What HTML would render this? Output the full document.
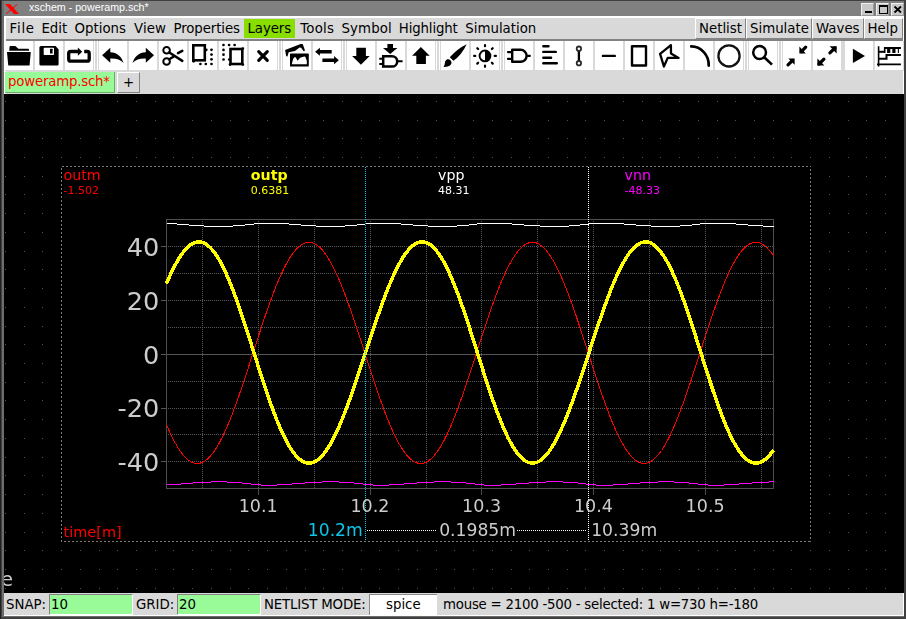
<!DOCTYPE html><html><head><meta charset="utf-8"><title>xschem - poweramp.sch*</title><style>
*{box-sizing:border-box;margin:0;padding:0}
html,body{width:906px;height:619px;overflow:hidden;background:#404040}
body{position:relative;font-family:"DejaVu Sans","Liberation Sans",sans-serif;color:#000;font-size:13.33px}
.a{position:absolute}
.t{position:absolute;white-space:pre;line-height:1}
.btn{position:absolute;background:#d9d9d9;border-top:1px solid #fff;border-left:1px solid #fff;border-right:1px solid #828282;border-bottom:1px solid #828282}
.tb{position:absolute;top:41px;height:29px;width:28px;background:#fff}
.sep{position:absolute;top:41px;height:29px;width:1px;background:#fff}
svg{position:absolute;left:0;top:0;overflow:visible}
svg text{font-family:"DejaVu Sans","Liberation Sans",sans-serif}
</style></head><body>
<div class="a" style="left:0;top:0;width:906px;height:619px;background:#404040"></div>
<div class="a" style="left:0;top:0;width:1px;height:619px;background:#202020"></div>
<div class="a" style="left:2px;top:1px;width:902px;height:616px;background:#6e6e6e"></div>
<div class="a" style="left:4px;top:1px;width:900px;height:16px;background:#808080"></div>
<svg width="24" height="18"><polygon points="5,4 10,4 19,14 14,14" fill="#ff0000"/><line x1="17.3" y1="4.2" x2="6.3" y2="13.8" stroke="#ff0000" stroke-width="1"/></svg>
<div class="t" style="left:29px;top:2px;font-family:'Liberation Sans',sans-serif;font-size:10.67px;color:#fff">xschem - poweramp.sch*</div>
<div class="a" style="left:861px;top:3px;width:13px;height:13px;background:#c8c8c8;border-top:1px solid #f0f0f0;border-left:1px solid #f0f0f0;border-right:1px solid #9a9a9a;border-bottom:1px solid #9a9a9a"></div>
<div class="a" style="left:876px;top:3px;width:13px;height:13px;background:#c8c8c8;border-top:1px solid #f0f0f0;border-left:1px solid #f0f0f0;border-right:1px solid #9a9a9a;border-bottom:1px solid #9a9a9a"></div>
<div class="a" style="left:891px;top:3px;width:13px;height:13px;background:#c8c8c8;border-top:1px solid #f0f0f0;border-left:1px solid #f0f0f0;border-right:1px solid #9a9a9a;border-bottom:1px solid #9a9a9a"></div>
<div class="a" style="left:865px;top:11px;width:7px;height:2px;background:#000"></div>
<div class="a" style="left:879px;top:5px;width:9px;height:9px;border:1px solid #000;border-top-width:2px"></div>
<svg width="906" height="18"><path d="M894.5 6.5 L901 12.5 M901 6.5 L894.5 12.5" stroke="#000" stroke-width="1.8" fill="none"/></svg>
<div class="a" style="left:4px;top:16px;width:900px;height:600px;background:#fff"></div>
<div class="a" style="left:6px;top:18px;width:897px;height:597px;background:#d9d9d9"></div>
<div class="a" style="left:244px;top:19px;width:51px;height:19px;background:#88de00"></div>
<div class="t" style="left:9.6px;top:22px;letter-spacing:0.7px">File</div>
<div class="t" style="left:41.4px;top:22px;letter-spacing:0px">Edit</div>
<div class="t" style="left:74.5px;top:22px;letter-spacing:0px">Options</div>
<div class="t" style="left:134px;top:22px;letter-spacing:0.1px">View</div>
<div class="t" style="left:173.5px;top:22px;letter-spacing:-0.1px">Properties</div>
<div class="t" style="left:247.5px;top:22px;letter-spacing:-0.1px">Layers</div>
<div class="t" style="left:300.3px;top:22px;letter-spacing:0.2px">Tools</div>
<div class="t" style="left:341.5px;top:22px;letter-spacing:0.1px">Symbol</div>
<div class="t" style="left:398.8px;top:22px;letter-spacing:-0.15px">Highlight</div>
<div class="t" style="left:465.3px;top:22px;letter-spacing:0px">Simulation</div>
<div class="btn" style="left:695px;top:18px;width:51px;height:21px"></div>
<div class="t" style="left:699px;top:22px">Netlist</div>
<div class="btn" style="left:746px;top:18px;width:66px;height:21px"></div>
<div class="t" style="left:750px;top:22px">Simulate</div>
<div class="btn" style="left:812px;top:18px;width:52px;height:21px"></div>
<div class="t" style="left:816px;top:22px">Waves</div>
<div class="btn" style="left:864px;top:18px;width:39px;height:21px"></div>
<div class="t" style="left:867.5px;top:22px">Help</div>
<div class="a" style="left:6px;top:39px;width:897px;height:2px;background:#828282"></div>
<div class="a" style="left:5px;top:41px;width:899px;height:30px;background:#d9d9d9"></div>
<div class="tb" style="left:5px"></div>
<div class="tb" style="left:35px"></div>
<div class="tb" style="left:65px"></div>
<div class="tb" style="left:99px"></div>
<div class="tb" style="left:129px"></div>
<div class="tb" style="left:159px"></div>
<div class="tb" style="left:189px"></div>
<div class="tb" style="left:219px"></div>
<div class="tb" style="left:249px"></div>
<div class="tb" style="left:283px"></div>
<div class="tb" style="left:313px"></div>
<div class="tb" style="left:347px"></div>
<div class="tb" style="left:377px"></div>
<div class="tb" style="left:407px"></div>
<div class="tb" style="left:441px"></div>
<div class="tb" style="left:471px"></div>
<div class="tb" style="left:505px"></div>
<div class="tb" style="left:535px"></div>
<div class="tb" style="left:565px"></div>
<div class="tb" style="left:595px"></div>
<div class="tb" style="left:625px"></div>
<div class="tb" style="left:655px"></div>
<div class="tb" style="left:685px"></div>
<div class="tb" style="left:715px"></div>
<div class="tb" style="left:749px"></div>
<div class="tb" style="left:783px"></div>
<div class="tb" style="left:813px"></div>
<div class="tb" style="left:845px"></div>
<div class="tb" style="left:875px"></div>
<div class="sep" style="left:94px"></div><div class="sep" style="left:97px"></div>
<div class="sep" style="left:278px"></div><div class="sep" style="left:281px"></div>
<div class="sep" style="left:342px"></div><div class="sep" style="left:345px"></div>
<div class="sep" style="left:436px"></div><div class="sep" style="left:439px"></div>
<div class="sep" style="left:500px"></div><div class="sep" style="left:503px"></div>
<div class="sep" style="left:744px"></div><div class="sep" style="left:747px"></div>
<div class="sep" style="left:778px"></div><div class="sep" style="left:781px"></div>
<svg width="906" height="72"><path d="M9.2,50.8 L9.6,46.6 Q9.7,46.1 10.3,46.1 L15.3,46.1 L18.4,48.8 L28.3,48.8 Q29,48.9 29.2,50.8 Z" fill="#000"/><path d="M7,51.9 L30.8,51.9 L29.6,64.9 Q29.5,65.5 28.9,65.5 L8.9,65.5 Q8.3,65.5 8.2,64.9 Z" fill="#000"/><path d="M41,46.1 L55.6,46.1 L58.6,49.4 L58.6,64 Q58.6,65.5 57.1,65.5 L41,65.5 Q39.4,65.5 39.4,64 L39.4,47.6 Q39.4,46.1 41,46.1 Z" fill="#000"/><rect x="43.7" y="47.8" width="10.3" height="7.1" rx="0.6" fill="#fff"/><rect x="50" y="48.7" width="2.6" height="4.9" rx="0.5" fill="#000"/><path d="M78,51.5 H70.7 A2,2 0 0 0 68.7,53.5 V59.2 A2,2 0 0 0 70.7,61.2 H87.2 A2,2 0 0 0 89.2,59.2 V53.5 A2,2 0 0 0 87.2,51.5 H84.2" fill="none" stroke="#000" stroke-width="3.3"/><polygon points="77.9,47.6 82.2,51.7 77.9,55.8" fill="#000"/><path d="M102.1,55.2 L110.3,47.8 L110.3,52.3 C117,52.3 121.5,56.5 123.6,63 C120.5,59.3 116,58.3 110.3,58.5 L110.3,62.8 Z" fill="#000"/><path d="M102.1,55.2 L110.3,47.8 L110.3,52.3 C117,52.3 121.5,56.5 123.6,63 C120.5,59.3 116,58.3 110.3,58.5 L110.3,62.8 Z" fill="#000" transform="translate(256.1,0) scale(-1,1)"/><circle cx="166.6" cy="50.3" r="3.3" fill="none" stroke="#000" stroke-width="2"/><circle cx="166.6" cy="61.5" r="3.3" fill="none" stroke="#000" stroke-width="2"/><path d="M169.3,52.5 L182.3,60.9 M169.3,59.3 L173.8,56.5 M178,53.2 L182.3,50.9" stroke="#000" stroke-width="2.5" stroke-linecap="round" fill="none"/><rect x="193.3" y="45.3" width="11.5" height="15" fill="none" stroke="#000" stroke-width="2.6"/><circle cx="211.5" cy="49.8" r="1.35" fill="#000"/><circle cx="211.5" cy="54.6" r="1.35" fill="#000"/><circle cx="211.5" cy="59.3" r="1.35" fill="#000"/><circle cx="211.5" cy="64" r="1.35" fill="#000"/><circle cx="200.4" cy="64" r="1.35" fill="#000"/><circle cx="205.8" cy="64" r="1.35" fill="#000"/><circle cx="206.3" cy="49.8" r="1.35" fill="#000"/><circle cx="193.6" cy="61.3" r="1.35" fill="#000"/><rect x="230.5" y="49" width="11.8" height="15" fill="none" stroke="#000" stroke-width="2.6"/><circle cx="223.5" cy="45" r="1.35" fill="#000"/><circle cx="229.1" cy="45" r="1.35" fill="#000"/><circle cx="234.6" cy="45" r="1.35" fill="#000"/><circle cx="223.5" cy="49.9" r="1.35" fill="#000"/><circle cx="223.5" cy="54.7" r="1.35" fill="#000"/><circle cx="223.5" cy="59.5" r="1.35" fill="#000"/><circle cx="229.3" cy="59.5" r="1.35" fill="#000"/><circle cx="242.8" cy="48.5" r="1.35" fill="#000"/><circle cx="242.8" cy="64.6" r="1.35" fill="#000"/><circle cx="230" cy="64.6" r="1.35" fill="#000"/><path d="M258.7,51.6 L267.3,60.3 M267.3,51.6 L258.7,60.3" stroke="#000" stroke-width="3.1" stroke-linecap="round" fill="none"/><rect x="290" y="53.6" width="18.8" height="12.9" rx="0.5" fill="#000"/><polygon points="291.8,64.3 293.1,59.1 294.4,57.3 295.7,57.3 297.5,60.7 300.1,57.8 304.2,56.5 305.3,56.8 306.8,60.7 306.8,64.3" fill="#fff"/><polygon points="285.1,50.1 300.6,44.1 302.7,44.1 305,50.6 303.7,51.2 301.1,47.8 299.6,47.6 294.9,50.9 288.7,52.2 287.4,56.5 286.2,56.2" fill="#000"/><polygon points="315.1,51.7 319.9,47.7 319.9,49.9 331.7,49.9 331.7,53.6 319.9,53.6 319.9,55.8" fill="#000"/><polygon points="338.8,60.2 334.1,56.1 334.1,58.5 322.4,58.5 322.4,61.9 334.1,61.9 334.1,64.3" fill="#000"/><polygon points="356.3,47.8 365.9,47.8 365.9,55.9 369.7,55.9 360.9,64.7 352.1,55.9 356.3,55.9" fill="#000"/><polygon points="387.4,44.1 393,44.1 393,48.1 397.4,48.1 390.2,54 383,48.1 387.4,48.1" fill="#000"/><path d="M383.2,56.2 H392 A5.2,5.2 0 0 1 392,66.6 H383.2 Z" fill="none" stroke="#000" stroke-width="2.5"/><path d="M379.3,58.7 H383 M379.3,64 H383 M398,61.2 H402.6" stroke="#000" stroke-width="2" fill="none"/><polygon points="420.9,46.9 429.7,55.8 425.9,55.8 425.9,64 416.3,64 416.3,55.8 412.1,55.8" fill="#000"/><path d="M466.7,44.3 Q458,48.3 449.8,57.3 L453.4,60.7 Q461.5,55.4 466.7,44.3 Z" fill="#000"/><path d="M447.8,59.3 C450,59.3 452.1,61.4 451.4,63.5 C450.4,66.4 446.5,67 443.4,67 C445.3,65.3 444.5,62 445.6,60.8 C446.2,59.8 447,59.3 447.8,59.3 Z" fill="#000"/><circle cx="485" cy="55.9" r="5.4" fill="#fff" stroke="#000" stroke-width="1.9"/><path d="M485,50.5 A5.4,5.4 0 0 1 485,61.3 Z" fill="#000"/><path d="M494.70,55.90 L495.90,55.90 M491.86,62.76 L492.71,63.61 M485.00,65.60 L485.00,66.80 M478.14,62.76 L477.29,63.61 M475.30,55.90 L474.10,55.90 M478.14,49.04 L477.29,48.19 M485.00,46.20 L485.00,45.00 M491.86,49.04 L492.71,48.19" stroke="#000" stroke-width="2.2" stroke-linecap="round" fill="none"/><path d="M512.2,49.8 H520.6 A6,6 0 0 1 520.6,61.8 H512.2 Z" fill="none" stroke="#000" stroke-width="2.4" stroke-linejoin="round"/><path d="M508,52.1 H512 M508,58.9 H512 M527,55.9 H529.8" stroke="#000" stroke-width="2.2" stroke-linecap="round" fill="none"/><path d="M543.3,46.2 H548.5 M543.3,51.9 H555.8 M543.3,57.7 H551.1 M543.3,63.3 H556.8" stroke="#000" stroke-width="2.4" stroke-linecap="round" fill="none"/><path d="M578.9,51 V61" stroke="#000" stroke-width="2.3" fill="none"/><circle cx="578.9" cy="48.7" r="2.2" fill="#fff" stroke="#2a2a2a" stroke-width="1.8"/><circle cx="578.9" cy="63.2" r="2.2" fill="#fff" stroke="#2a2a2a" stroke-width="1.8"/><path d="M602.9,55.9 H614.8" stroke="#000" stroke-width="2.4" stroke-linecap="round" fill="none"/><rect x="632" y="46.3" width="14" height="19.2" fill="none" stroke="#000" stroke-width="2.4" stroke-linejoin="round"/><polygon points="670.9,45.2 660.1,53.9 663.9,66.5 667.7,57.9 678.6,57.9 671,53.6" fill="none" stroke="#000" stroke-width="2.3" stroke-linejoin="round"/><path d="M691.2,46.4 A17.5,18.5 0 0 1 708.7,65.6" stroke="#000" stroke-width="2.7" stroke-linecap="round" fill="none"/><circle cx="729" cy="55.9" r="10.6" fill="none" stroke="#111" stroke-width="2.3"/><circle cx="759.6" cy="52.5" r="6.4" fill="none" stroke="#000" stroke-width="2.5"/><path d="M764.2,57.2 L772,64.6" stroke="#000" stroke-width="2.6" fill="none"/><polygon points="788.3,58.5 794.6,58.5 794.6,64.8" fill="#000"/><path d="M788,64.9 L792.5,60.5" stroke="#000" stroke-width="3.2" stroke-linecap="round"/><polygon points="799.4,46.6 799.4,53.6 805.8,53.6" fill="#000"/><path d="M805.7,47.1 L801.5,51.5" stroke="#000" stroke-width="3.2" stroke-linecap="round"/><polygon points="829.7,46.3 836.6,46.3 836.6,53.6" fill="#000"/><path d="M829.9,52.8 L835,48" stroke="#000" stroke-width="3.2" stroke-linecap="round"/><polygon points="817.4,58.5 817.4,65.5 824.4,65.5" fill="#000"/><path d="M823.9,59.1 L819,64" stroke="#000" stroke-width="3.2" stroke-linecap="round"/><polygon points="852.9,48.8 852.9,63 865,55.9" fill="#000"/><path d="M878.6,46.2 V66.6 M877,64.4 H900.9" stroke="#000" stroke-width="1.6" fill="none"/><path d="M879,51.8 H884.9" stroke="#000" stroke-width="2" fill="none"/><rect x="883.9" y="47" width="15" height="6" fill="#000"/><rect x="897" y="47" width="3.9" height="2" fill="#000"/><rect x="885.5" y="49" width="1.6" height="4.2" fill="#fff"/><rect x="890.3" y="49" width="2" height="4.2" fill="#fff"/><rect x="895.5" y="49" width="2.3" height="4.2" fill="#fff"/><path d="M879,58.7 H886.5 V55.1 H900.9" stroke="#000" stroke-width="2" fill="none"/></svg>
<div class="a" style="left:5px;top:72px;width:110px;height:21px;background:#98fb98;border-right:1px solid #62b062;border-bottom:1px solid #62b062"></div>
<div class="t" style="left:8px;top:75px;letter-spacing:-0.2px;color:#f00">poweramp.sch*</div>
<div class="btn" style="left:117px;top:72px;width:23px;height:21px"></div>
<div class="t" style="left:123px;top:76px">+</div>
<div class="a" style="left:4px;top:94px;width:900px;height:499px;background:#000"></div>
<svg width="906" height="619" style="clip-path:inset(94px 2px 26px 4px);will-change:transform"><path d="M5 101.5h1M24 101.5h1M42 101.5h1M61 101.5h1M80 101.5h1M99 101.5h1M117 101.5h1M136 101.5h1M155 101.5h1M173 101.5h1M192 101.5h1M211 101.5h1M230 101.5h1M248 101.5h1M267 101.5h1M286 101.5h1M305 101.5h1M323 101.5h1M342 101.5h1M361 101.5h1M379 101.5h1M398 101.5h1M417 101.5h1M436 101.5h1M454 101.5h1M473 101.5h1M492 101.5h1M511 101.5h1M529 101.5h1M548 101.5h1M567 101.5h1M585 101.5h1M604 101.5h1M623 101.5h1M642 101.5h1M660 101.5h1M679 101.5h1M698 101.5h1M717 101.5h1M735 101.5h1M754 101.5h1M773 101.5h1M791 101.5h1M810 101.5h1M829 101.5h1M848 101.5h1M866 101.5h1M885 101.5h1M5 120.5h1M24 120.5h1M42 120.5h1M61 120.5h1M80 120.5h1M99 120.5h1M117 120.5h1M136 120.5h1M155 120.5h1M173 120.5h1M192 120.5h1M211 120.5h1M230 120.5h1M248 120.5h1M267 120.5h1M286 120.5h1M305 120.5h1M323 120.5h1M342 120.5h1M361 120.5h1M379 120.5h1M398 120.5h1M417 120.5h1M436 120.5h1M454 120.5h1M473 120.5h1M492 120.5h1M511 120.5h1M529 120.5h1M548 120.5h1M567 120.5h1M585 120.5h1M604 120.5h1M623 120.5h1M642 120.5h1M660 120.5h1M679 120.5h1M698 120.5h1M717 120.5h1M735 120.5h1M754 120.5h1M773 120.5h1M791 120.5h1M810 120.5h1M829 120.5h1M848 120.5h1M866 120.5h1M885 120.5h1M5 138.5h1M24 138.5h1M42 138.5h1M61 138.5h1M80 138.5h1M99 138.5h1M117 138.5h1M136 138.5h1M155 138.5h1M173 138.5h1M192 138.5h1M211 138.5h1M230 138.5h1M248 138.5h1M267 138.5h1M286 138.5h1M305 138.5h1M323 138.5h1M342 138.5h1M361 138.5h1M379 138.5h1M398 138.5h1M417 138.5h1M436 138.5h1M454 138.5h1M473 138.5h1M492 138.5h1M511 138.5h1M529 138.5h1M548 138.5h1M567 138.5h1M585 138.5h1M604 138.5h1M623 138.5h1M642 138.5h1M660 138.5h1M679 138.5h1M698 138.5h1M717 138.5h1M735 138.5h1M754 138.5h1M773 138.5h1M791 138.5h1M810 138.5h1M829 138.5h1M848 138.5h1M866 138.5h1M885 138.5h1M5 157.5h1M24 157.5h1M42 157.5h1M61 157.5h1M80 157.5h1M99 157.5h1M117 157.5h1M136 157.5h1M155 157.5h1M173 157.5h1M192 157.5h1M211 157.5h1M230 157.5h1M248 157.5h1M267 157.5h1M286 157.5h1M305 157.5h1M323 157.5h1M342 157.5h1M361 157.5h1M379 157.5h1M398 157.5h1M417 157.5h1M436 157.5h1M454 157.5h1M473 157.5h1M492 157.5h1M511 157.5h1M529 157.5h1M548 157.5h1M567 157.5h1M585 157.5h1M604 157.5h1M623 157.5h1M642 157.5h1M660 157.5h1M679 157.5h1M698 157.5h1M717 157.5h1M735 157.5h1M754 157.5h1M773 157.5h1M791 157.5h1M810 157.5h1M829 157.5h1M848 157.5h1M866 157.5h1M885 157.5h1M5 176.5h1M24 176.5h1M42 176.5h1M829 176.5h1M848 176.5h1M866 176.5h1M885 176.5h1M5 194.5h1M24 194.5h1M42 194.5h1M829 194.5h1M848 194.5h1M866 194.5h1M885 194.5h1M5 213.5h1M24 213.5h1M42 213.5h1M829 213.5h1M848 213.5h1M866 213.5h1M885 213.5h1M5 232.5h1M24 232.5h1M42 232.5h1M829 232.5h1M848 232.5h1M866 232.5h1M885 232.5h1M5 251.5h1M24 251.5h1M42 251.5h1M829 251.5h1M848 251.5h1M866 251.5h1M885 251.5h1M5 269.5h1M24 269.5h1M42 269.5h1M829 269.5h1M848 269.5h1M866 269.5h1M885 269.5h1M5 288.5h1M24 288.5h1M42 288.5h1M829 288.5h1M848 288.5h1M866 288.5h1M885 288.5h1M5 307.5h1M24 307.5h1M42 307.5h1M829 307.5h1M848 307.5h1M866 307.5h1M885 307.5h1M5 326.5h1M24 326.5h1M42 326.5h1M829 326.5h1M848 326.5h1M866 326.5h1M885 326.5h1M5 344.5h1M24 344.5h1M42 344.5h1M829 344.5h1M848 344.5h1M866 344.5h1M885 344.5h1M5 363.5h1M24 363.5h1M42 363.5h1M829 363.5h1M848 363.5h1M866 363.5h1M885 363.5h1M5 382.5h1M24 382.5h1M42 382.5h1M829 382.5h1M848 382.5h1M866 382.5h1M885 382.5h1M5 400.5h1M24 400.5h1M42 400.5h1M829 400.5h1M848 400.5h1M866 400.5h1M885 400.5h1M5 419.5h1M24 419.5h1M42 419.5h1M829 419.5h1M848 419.5h1M866 419.5h1M885 419.5h1M5 438.5h1M24 438.5h1M42 438.5h1M829 438.5h1M848 438.5h1M866 438.5h1M885 438.5h1M5 457.5h1M24 457.5h1M42 457.5h1M829 457.5h1M848 457.5h1M866 457.5h1M885 457.5h1M5 475.5h1M24 475.5h1M42 475.5h1M829 475.5h1M848 475.5h1M866 475.5h1M885 475.5h1M5 494.5h1M24 494.5h1M42 494.5h1M829 494.5h1M848 494.5h1M866 494.5h1M885 494.5h1M5 513.5h1M24 513.5h1M42 513.5h1M829 513.5h1M848 513.5h1M866 513.5h1M885 513.5h1M5 532.5h1M24 532.5h1M42 532.5h1M829 532.5h1M848 532.5h1M866 532.5h1M885 532.5h1M5 550.5h1M24 550.5h1M42 550.5h1M61 550.5h1M80 550.5h1M99 550.5h1M117 550.5h1M136 550.5h1M155 550.5h1M173 550.5h1M192 550.5h1M211 550.5h1M230 550.5h1M248 550.5h1M267 550.5h1M286 550.5h1M305 550.5h1M323 550.5h1M342 550.5h1M361 550.5h1M379 550.5h1M398 550.5h1M417 550.5h1M436 550.5h1M454 550.5h1M473 550.5h1M492 550.5h1M511 550.5h1M529 550.5h1M548 550.5h1M567 550.5h1M585 550.5h1M604 550.5h1M623 550.5h1M642 550.5h1M660 550.5h1M679 550.5h1M698 550.5h1M717 550.5h1M735 550.5h1M754 550.5h1M773 550.5h1M791 550.5h1M810 550.5h1M829 550.5h1M848 550.5h1M866 550.5h1M885 550.5h1M5 569.5h1M24 569.5h1M42 569.5h1M61 569.5h1M80 569.5h1M99 569.5h1M117 569.5h1M136 569.5h1M155 569.5h1M173 569.5h1M192 569.5h1M211 569.5h1M230 569.5h1M248 569.5h1M267 569.5h1M286 569.5h1M305 569.5h1M323 569.5h1M342 569.5h1M361 569.5h1M379 569.5h1M398 569.5h1M417 569.5h1M436 569.5h1M454 569.5h1M473 569.5h1M492 569.5h1M511 569.5h1M529 569.5h1M548 569.5h1M567 569.5h1M585 569.5h1M604 569.5h1M623 569.5h1M642 569.5h1M660 569.5h1M679 569.5h1M698 569.5h1M717 569.5h1M735 569.5h1M754 569.5h1M773 569.5h1M791 569.5h1M810 569.5h1M829 569.5h1M848 569.5h1M866 569.5h1M885 569.5h1M5 588.5h1M24 588.5h1M42 588.5h1M61 588.5h1M80 588.5h1M99 588.5h1M117 588.5h1M136 588.5h1M155 588.5h1M173 588.5h1M192 588.5h1M211 588.5h1M230 588.5h1M248 588.5h1M267 588.5h1M286 588.5h1M305 588.5h1M323 588.5h1M342 588.5h1M361 588.5h1M379 588.5h1M398 588.5h1M417 588.5h1M436 588.5h1M454 588.5h1M473 588.5h1M492 588.5h1M511 588.5h1M529 588.5h1M548 588.5h1M567 588.5h1M585 588.5h1M604 588.5h1M623 588.5h1M642 588.5h1M660 588.5h1M679 588.5h1M698 588.5h1M717 588.5h1M735 588.5h1M754 588.5h1M773 588.5h1M791 588.5h1M810 588.5h1M829 588.5h1M848 588.5h1M866 588.5h1M885 588.5h1" stroke="#555" stroke-width="1" fill="none" shape-rendering="crispEdges"/><rect x="61.5" y="166.5" width="749.0" height="375.0" fill="#000"/><g shape-rendering="crispEdges"><line x1="202.5" y1="221" x2="202.5" y2="488" stroke="#585858" stroke-dasharray="1 1"/><line x1="258.5" y1="221" x2="258.5" y2="488" stroke="#585858" stroke-dasharray="1 1"/><line x1="314.5" y1="221" x2="314.5" y2="488" stroke="#585858" stroke-dasharray="1 1"/><line x1="370.5" y1="221" x2="370.5" y2="488" stroke="#585858" stroke-dasharray="1 1"/><line x1="426.5" y1="221" x2="426.5" y2="488" stroke="#585858" stroke-dasharray="1 1"/><line x1="481.5" y1="221" x2="481.5" y2="488" stroke="#585858" stroke-dasharray="1 1"/><line x1="537.5" y1="221" x2="537.5" y2="488" stroke="#585858" stroke-dasharray="1 1"/><line x1="593.5" y1="221" x2="593.5" y2="488" stroke="#585858" stroke-dasharray="1 1"/><line x1="649.5" y1="221" x2="649.5" y2="488" stroke="#585858" stroke-dasharray="1 1"/><line x1="705.5" y1="221" x2="705.5" y2="488" stroke="#585858" stroke-dasharray="1 1"/><line x1="761.5" y1="221" x2="761.5" y2="488" stroke="#585858" stroke-dasharray="1 1"/><line x1="168" y1="246.5" x2="773" y2="246.5" stroke="#585858" stroke-dasharray="1 1"/><line x1="168" y1="273.5" x2="773" y2="273.5" stroke="#585858" stroke-dasharray="1 1"/><line x1="168" y1="300.5" x2="773" y2="300.5" stroke="#585858" stroke-dasharray="1 1"/><line x1="168" y1="327.5" x2="773" y2="327.5" stroke="#585858" stroke-dasharray="1 1"/><line x1="168" y1="381.5" x2="773" y2="381.5" stroke="#585858" stroke-dasharray="1 1"/><line x1="168" y1="408.5" x2="773" y2="408.5" stroke="#585858" stroke-dasharray="1 1"/><line x1="168" y1="434.5" x2="773" y2="434.5" stroke="#585858" stroke-dasharray="1 1"/><line x1="168" y1="461.5" x2="773" y2="461.5" stroke="#585858" stroke-dasharray="1 1"/><line x1="166.5" y1="354.5" x2="773.5" y2="354.5" stroke="#555"/><line x1="161" y1="246.5" x2="166.5" y2="246.5" stroke="#555"/><line x1="161" y1="300.5" x2="166.5" y2="300.5" stroke="#555"/><line x1="161" y1="354.5" x2="166.5" y2="354.5" stroke="#555"/><line x1="161" y1="408.5" x2="166.5" y2="408.5" stroke="#555"/><line x1="161" y1="461.5" x2="166.5" y2="461.5" stroke="#555"/><line x1="258.5" y1="488.5" x2="258.5" y2="495" stroke="#4c4c4c"/><line x1="370.5" y1="488.5" x2="370.5" y2="495" stroke="#4c4c4c"/><line x1="481.5" y1="488.5" x2="481.5" y2="495" stroke="#4c4c4c"/><line x1="593.5" y1="488.5" x2="593.5" y2="495" stroke="#4c4c4c"/><line x1="705.5" y1="488.5" x2="705.5" y2="495" stroke="#4c4c4c"/><rect x="166.5" y="219.5" width="607.0" height="269.0" fill="none" stroke="#4f4f4f"/></g><g shape-rendering="crispEdges"><polyline points="166.5,424.7 167.5,427.1 168.5,429.3 169.5,431.6 170.5,433.7 171.5,435.8 172.5,437.8 173.5,439.8 174.5,441.7 175.5,443.5 176.5,445.2 177.5,446.9 178.5,448.5 179.5,450.0 180.5,451.5 181.5,452.9 182.5,454.1 183.5,455.4 184.5,456.5 185.5,457.5 186.5,458.5 187.5,459.4 188.5,460.2 189.5,460.9 190.5,461.5 191.5,462.1 192.5,462.5 193.5,462.9 194.5,463.2 195.5,463.4 196.5,463.5 197.5,463.5 198.5,463.4 199.5,463.3 200.5,463.0 201.5,462.7 202.5,462.3 203.5,461.8 204.5,461.2 205.5,460.5 206.5,459.7 207.5,458.9 208.5,458.0 209.5,457.0 210.5,455.9 211.5,454.7 212.5,453.4 213.5,452.1 214.5,450.7 215.5,449.2 216.5,447.6 217.5,446.0 218.5,444.3 219.5,442.5 220.5,440.6 221.5,438.7 222.5,436.7 223.5,434.6 224.5,432.5 225.5,430.3 226.5,428.1 227.5,425.8 228.5,423.4 229.5,421.0 230.5,418.5 231.5,416.0 232.5,413.4 233.5,410.8 234.5,408.1 235.5,405.4 236.5,402.6 237.5,399.8 238.5,397.0 239.5,394.1 240.5,391.2 241.5,388.3 242.5,385.3 243.5,382.3 244.5,379.3 245.5,376.3 246.5,373.2 247.5,370.2 248.5,367.1 249.5,364.0 250.5,360.9 251.5,357.8 252.5,354.7 253.5,351.6 254.5,348.5 255.5,345.4 256.5,342.3 257.5,339.2 258.5,336.1 259.5,333.0 260.5,330.0 261.5,326.9 262.5,323.9 263.5,320.9 264.5,318.0 265.5,315.0 266.5,312.1 267.5,309.3 268.5,306.4 269.5,303.6 270.5,300.9 271.5,298.1 272.5,295.5 273.5,292.8 274.5,290.2 275.5,287.7 276.5,285.2 277.5,282.8 278.5,280.4 279.5,278.1 280.5,275.8 281.5,273.6 282.5,271.5 283.5,269.4 284.5,267.4 285.5,265.5 286.5,263.6 287.5,261.8 288.5,260.1 289.5,258.4 290.5,256.8 291.5,255.3 292.5,253.9 293.5,252.6 294.5,251.3 295.5,250.1 296.5,249.0 297.5,248.0 298.5,247.0 299.5,246.2 300.5,245.4 301.5,244.7 302.5,244.1 303.5,243.6 304.5,243.2 305.5,242.8 306.5,242.6 307.5,242.4 308.5,242.3 309.5,242.3 310.5,242.4 311.5,242.6 312.5,242.9 313.5,243.2 314.5,243.6 315.5,244.2 316.5,244.8 317.5,245.5 318.5,246.3 319.5,247.1 320.5,248.1 321.5,249.1 322.5,250.2 323.5,251.4 324.5,252.7 325.5,254.1 326.5,255.5 327.5,257.0 328.5,258.6 329.5,260.3 330.5,262.0 331.5,263.8 332.5,265.7 333.5,267.6 334.5,269.7 335.5,271.7 336.5,273.9 337.5,276.1 338.5,278.4 339.5,280.7 340.5,283.1 341.5,285.5 342.5,288.0 343.5,290.5 344.5,293.1 345.5,295.8 346.5,298.5 347.5,301.2 348.5,304.0 349.5,306.8 350.5,309.6 351.5,312.5 352.5,315.4 353.5,318.3 354.5,321.3 355.5,324.3 356.5,327.3 357.5,330.3 358.5,333.4 359.5,336.5 360.5,339.6 361.5,342.6 362.5,345.7 363.5,348.8 364.5,352.0 365.5,355.1 366.5,358.2 367.5,361.3 368.5,364.4 369.5,367.5 370.5,370.5 371.5,373.6 372.5,376.6 373.5,379.7 374.5,382.7 375.5,385.7 376.5,388.6 377.5,391.6 378.5,394.4 379.5,397.3 380.5,400.1 381.5,402.9 382.5,405.7 383.5,408.4 384.5,411.1 385.5,413.7 386.5,416.3 387.5,418.8 388.5,421.3 389.5,423.7 390.5,426.0 391.5,428.3 392.5,430.6 393.5,432.8 394.5,434.9 395.5,436.9 396.5,438.9 397.5,440.8 398.5,442.7 399.5,444.5 400.5,446.2 401.5,447.8 402.5,449.4 403.5,450.9 404.5,452.3 405.5,453.6 406.5,454.8 407.5,456.0 408.5,457.1 409.5,458.1 410.5,459.0 411.5,459.8 412.5,460.6 413.5,461.2 414.5,461.8 415.5,462.3 416.5,462.7 417.5,463.0 418.5,463.3 419.5,463.4 420.5,463.5 421.5,463.5 422.5,463.3 423.5,463.1 424.5,462.8 425.5,462.5 426.5,462.0 427.5,461.4 428.5,460.8 429.5,460.1 430.5,459.3 431.5,458.4 432.5,457.4 433.5,456.4 434.5,455.2 435.5,454.0 436.5,452.7 437.5,451.3 438.5,449.9 439.5,448.3 440.5,446.7 441.5,445.0 442.5,443.3 443.5,441.4 444.5,439.5 445.5,437.6 446.5,435.5 447.5,433.4 448.5,431.3 449.5,429.1 450.5,426.8 451.5,424.4 452.5,422.0 453.5,419.6 454.5,417.1 455.5,414.5 456.5,411.9 457.5,409.3 458.5,406.6 459.5,403.8 460.5,401.0 461.5,398.2 462.5,395.4 463.5,392.5 464.5,389.6 465.5,386.6 466.5,383.6 467.5,380.6 468.5,377.6 469.5,374.6 470.5,371.5 471.5,368.5 472.5,365.4 473.5,362.3 474.5,359.2 475.5,356.1 476.5,353.0 477.5,349.8 478.5,346.7 479.5,343.6 480.5,340.5 481.5,337.5 482.5,334.4 483.5,331.3 484.5,328.3 485.5,325.3 486.5,322.3 487.5,319.3 488.5,316.3 489.5,313.4 490.5,310.5 491.5,307.7 492.5,304.9 493.5,302.1 494.5,299.3 495.5,296.6 496.5,294.0 497.5,291.4 498.5,288.8 499.5,286.3 500.5,283.8 501.5,281.4 502.5,279.1 503.5,276.8 504.5,274.6 505.5,272.4 506.5,270.3 507.5,268.3 508.5,266.3 509.5,264.4 510.5,262.6 511.5,260.8 512.5,259.1 513.5,257.5 514.5,256.0 515.5,254.5 516.5,253.1 517.5,251.8 518.5,250.6 519.5,249.5 520.5,248.4 521.5,247.4 522.5,246.5 523.5,245.7 524.5,245.0 525.5,244.4 526.5,243.8 527.5,243.3 528.5,243.0 529.5,242.7 530.5,242.5 531.5,242.3 532.5,242.3 533.5,242.4 534.5,242.5 535.5,242.7 536.5,243.0 537.5,243.4 538.5,243.9 539.5,244.5 540.5,245.2 541.5,245.9 542.5,246.7 543.5,247.7 544.5,248.7 545.5,249.7 546.5,250.9 547.5,252.1 548.5,253.5 549.5,254.9 550.5,256.3 551.5,257.9 552.5,259.5 553.5,261.2 554.5,263.0 555.5,264.9 556.5,266.8 557.5,268.8 558.5,270.8 559.5,272.9 560.5,275.1 561.5,277.4 562.5,279.7 563.5,282.0 564.5,284.4 565.5,286.9 566.5,289.4 567.5,292.0 568.5,294.6 569.5,297.3 570.5,300.0 571.5,302.7 572.5,305.5 573.5,308.4 574.5,311.2 575.5,314.1 576.5,317.0 577.5,320.0 578.5,323.0 579.5,326.0 580.5,329.0 581.5,332.1 582.5,335.1 583.5,338.2 584.5,341.3 585.5,344.4 586.5,347.5 587.5,350.6 588.5,353.7 589.5,356.8 590.5,359.9 591.5,363.0 592.5,366.1 593.5,369.2 594.5,372.3 595.5,375.3 596.5,378.3 597.5,381.4 598.5,384.4 599.5,387.3 600.5,390.3 601.5,393.2 602.5,396.1 603.5,398.9 604.5,401.7 605.5,404.5 606.5,407.2 607.5,409.9 608.5,412.5 609.5,415.1 610.5,417.7 611.5,420.2 612.5,422.6 613.5,425.0 614.5,427.3 615.5,429.6 616.5,431.8 617.5,434.0 618.5,436.0 619.5,438.1 620.5,440.0 621.5,441.9 622.5,443.7 623.5,445.4 624.5,447.1 625.5,448.7 626.5,450.2 627.5,451.6 628.5,453.0 629.5,454.3 630.5,455.5 631.5,456.6 632.5,457.6 633.5,458.6 634.5,459.5 635.5,460.3 636.5,461.0 637.5,461.6 638.5,462.1 639.5,462.6 640.5,462.9 641.5,463.2 642.5,463.4 643.5,463.5 644.5,463.5 645.5,463.4 646.5,463.2 647.5,463.0 648.5,462.6 649.5,462.2 650.5,461.7 651.5,461.1 652.5,460.4 653.5,459.6 654.5,458.8 655.5,457.8 656.5,456.8 657.5,455.7 658.5,454.5 659.5,453.3 660.5,451.9 661.5,450.5 662.5,449.0 663.5,447.4 664.5,445.8 665.5,444.1 666.5,442.3 667.5,440.4 668.5,438.5 669.5,436.5 670.5,434.4 671.5,432.2 672.5,430.0 673.5,427.8 674.5,425.5 675.5,423.1 676.5,420.7 677.5,418.2 678.5,415.7 679.5,413.1 680.5,410.4 681.5,407.8 682.5,405.0 683.5,402.3 684.5,399.5 685.5,396.6 686.5,393.8 687.5,390.9 688.5,387.9 689.5,385.0 690.5,382.0 691.5,379.0 692.5,375.9 693.5,372.9 694.5,369.8 695.5,366.7 696.5,363.6 697.5,360.5 698.5,357.4 699.5,354.3 700.5,351.2 701.5,348.1 702.5,345.0 703.5,341.9 704.5,338.8 705.5,335.7 706.5,332.7 707.5,329.6 708.5,326.6 709.5,323.6 710.5,320.6 711.5,317.6 712.5,314.7 713.5,311.8 714.5,308.9 715.5,306.1 716.5,303.3 717.5,300.5 718.5,297.8 719.5,295.1 720.5,292.5 721.5,289.9 722.5,287.4 723.5,284.9 724.5,282.5 725.5,280.1 726.5,277.8 727.5,275.6 728.5,273.4 729.5,271.2 730.5,269.2 731.5,267.2 732.5,265.2 733.5,263.4 734.5,261.6 735.5,259.9 736.5,258.2 737.5,256.7 738.5,255.2 739.5,253.7 740.5,252.4 741.5,251.1 742.5,250.0 743.5,248.9 744.5,247.9 745.5,246.9 746.5,246.1 747.5,245.3 748.5,244.6 749.5,244.0 750.5,243.5 751.5,243.1 752.5,242.8 753.5,242.5 754.5,242.4 755.5,242.3 756.5,242.3 757.5,242.4 758.5,242.6 759.5,242.9 760.5,243.3 761.5,243.7 762.5,244.2 763.5,244.9 764.5,245.6 765.5,246.4 766.5,247.2 767.5,248.2 768.5,249.3 769.5,250.4 770.5,251.6 771.5,252.9 772.5,254.2 773.5,255.7" fill="none" stroke="#ff0000" stroke-width="1"/><polyline points="166.5,223.5 167.5,223.5 168.5,223.5 169.5,223.5 170.5,223.5 171.5,223.5 172.5,223.5 173.5,223.5 174.5,223.5 175.5,223.5 176.5,223.5 177.5,224.5 178.5,224.5 179.5,224.5 180.5,224.5 181.5,224.5 182.5,224.5 183.5,224.5 184.5,224.5 185.5,224.5 186.5,224.5 187.5,224.5 188.5,224.5 189.5,225.5 190.5,225.5 191.5,225.5 192.5,225.5 193.5,225.5 194.5,225.5 195.5,225.5 196.5,225.5 197.5,225.5 198.5,225.5 199.5,225.5 200.5,225.5 201.5,225.5 202.5,225.5 203.5,225.5 204.5,226.5 205.5,226.5 206.5,226.5 207.5,226.5 208.5,226.5 209.5,226.5 210.5,226.5 211.5,226.5 212.5,226.5 213.5,226.5 214.5,226.5 215.5,226.5 216.5,226.5 217.5,226.5 218.5,226.5 219.5,226.5 220.5,226.5 221.5,226.5 222.5,226.5 223.5,226.5 224.5,226.5 225.5,226.5 226.5,226.5 227.5,226.5 228.5,226.5 229.5,226.5 230.5,226.5 231.5,226.5 232.5,226.5 233.5,225.5 234.5,225.5 235.5,225.5 236.5,225.5 237.5,225.5 238.5,225.5 239.5,225.5 240.5,225.5 241.5,225.5 242.5,225.5 243.5,225.5 244.5,225.5 245.5,224.5 246.5,224.5 247.5,224.5 248.5,224.5 249.5,224.5 250.5,224.5 251.5,224.5 252.5,224.5 253.5,224.5 254.5,223.5 255.5,223.5 256.5,223.5 257.5,223.5 258.5,223.5 259.5,223.5 260.5,223.5 261.5,223.5 262.5,223.5 263.5,223.5 264.5,223.5 265.5,223.5 266.5,223.5 267.5,223.5 268.5,223.5 269.5,223.5 270.5,223.5 271.5,223.5 272.5,223.5 273.5,223.5 274.5,223.5 275.5,223.5 276.5,223.5 277.5,223.5 278.5,223.5 279.5,223.5 280.5,223.5 281.5,223.5 282.5,223.5 283.5,223.5 284.5,223.5 285.5,223.5 286.5,223.5 287.5,223.5 288.5,223.5 289.5,224.5 290.5,224.5 291.5,224.5 292.5,224.5 293.5,224.5 294.5,224.5 295.5,224.5 296.5,224.5 297.5,224.5 298.5,224.5 299.5,224.5 300.5,224.5 301.5,225.5 302.5,225.5 303.5,225.5 304.5,225.5 305.5,225.5 306.5,225.5 307.5,225.5 308.5,225.5 309.5,225.5 310.5,225.5 311.5,225.5 312.5,225.5 313.5,225.5 314.5,225.5 315.5,225.5 316.5,226.5 317.5,226.5 318.5,226.5 319.5,226.5 320.5,226.5 321.5,226.5 322.5,226.5 323.5,226.5 324.5,226.5 325.5,226.5 326.5,226.5 327.5,226.5 328.5,226.5 329.5,226.5 330.5,226.5 331.5,226.5 332.5,226.5 333.5,226.5 334.5,226.5 335.5,226.5 336.5,226.5 337.5,226.5 338.5,226.5 339.5,226.5 340.5,226.5 341.5,226.5 342.5,226.5 343.5,226.5 344.5,226.5 345.5,225.5 346.5,225.5 347.5,225.5 348.5,225.5 349.5,225.5 350.5,225.5 351.5,225.5 352.5,225.5 353.5,225.5 354.5,225.5 355.5,225.5 356.5,225.5 357.5,224.5 358.5,224.5 359.5,224.5 360.5,224.5 361.5,224.5 362.5,224.5 363.5,224.5 364.5,224.5 365.5,223.5 366.5,223.5 367.5,223.5 368.5,223.5 369.5,223.5 370.5,223.5 371.5,223.5 372.5,223.5 373.5,223.5 374.5,223.5 375.5,223.5 376.5,223.5 377.5,223.5 378.5,223.5 379.5,223.5 380.5,223.5 381.5,223.5 382.5,223.5 383.5,223.5 384.5,223.5 385.5,223.5 386.5,223.5 387.5,223.5 388.5,223.5 389.5,223.5 390.5,223.5 391.5,223.5 392.5,223.5 393.5,223.5 394.5,223.5 395.5,223.5 396.5,223.5 397.5,223.5 398.5,223.5 399.5,223.5 400.5,223.5 401.5,224.5 402.5,224.5 403.5,224.5 404.5,224.5 405.5,224.5 406.5,224.5 407.5,224.5 408.5,224.5 409.5,224.5 410.5,224.5 411.5,224.5 412.5,224.5 413.5,225.5 414.5,225.5 415.5,225.5 416.5,225.5 417.5,225.5 418.5,225.5 419.5,225.5 420.5,225.5 421.5,225.5 422.5,225.5 423.5,225.5 424.5,225.5 425.5,225.5 426.5,225.5 427.5,225.5 428.5,226.5 429.5,226.5 430.5,226.5 431.5,226.5 432.5,226.5 433.5,226.5 434.5,226.5 435.5,226.5 436.5,226.5 437.5,226.5 438.5,226.5 439.5,226.5 440.5,226.5 441.5,226.5 442.5,226.5 443.5,226.5 444.5,226.5 445.5,226.5 446.5,226.5 447.5,226.5 448.5,226.5 449.5,226.5 450.5,226.5 451.5,226.5 452.5,226.5 453.5,226.5 454.5,226.5 455.5,226.5 456.5,226.5 457.5,225.5 458.5,225.5 459.5,225.5 460.5,225.5 461.5,225.5 462.5,225.5 463.5,225.5 464.5,225.5 465.5,225.5 466.5,225.5 467.5,225.5 468.5,225.5 469.5,224.5 470.5,224.5 471.5,224.5 472.5,224.5 473.5,224.5 474.5,224.5 475.5,224.5 476.5,224.5 477.5,223.5 478.5,223.5 479.5,223.5 480.5,223.5 481.5,223.5 482.5,223.5 483.5,223.5 484.5,223.5 485.5,223.5 486.5,223.5 487.5,223.5 488.5,223.5 489.5,223.5 490.5,223.5 491.5,223.5 492.5,223.5 493.5,223.5 494.5,223.5 495.5,223.5 496.5,223.5 497.5,223.5 498.5,223.5 499.5,223.5 500.5,223.5 501.5,223.5 502.5,223.5 503.5,223.5 504.5,223.5 505.5,223.5 506.5,223.5 507.5,223.5 508.5,223.5 509.5,223.5 510.5,223.5 511.5,223.5 512.5,224.5 513.5,224.5 514.5,224.5 515.5,224.5 516.5,224.5 517.5,224.5 518.5,224.5 519.5,224.5 520.5,224.5 521.5,224.5 522.5,224.5 523.5,224.5 524.5,225.5 525.5,225.5 526.5,225.5 527.5,225.5 528.5,225.5 529.5,225.5 530.5,225.5 531.5,225.5 532.5,225.5 533.5,225.5 534.5,225.5 535.5,225.5 536.5,225.5 537.5,225.5 538.5,225.5 539.5,225.5 540.5,226.5 541.5,226.5 542.5,226.5 543.5,226.5 544.5,226.5 545.5,226.5 546.5,226.5 547.5,226.5 548.5,226.5 549.5,226.5 550.5,226.5 551.5,226.5 552.5,226.5 553.5,226.5 554.5,226.5 555.5,226.5 556.5,226.5 557.5,226.5 558.5,226.5 559.5,226.5 560.5,226.5 561.5,226.5 562.5,226.5 563.5,226.5 564.5,226.5 565.5,226.5 566.5,226.5 567.5,226.5 568.5,226.5 569.5,225.5 570.5,225.5 571.5,225.5 572.5,225.5 573.5,225.5 574.5,225.5 575.5,225.5 576.5,225.5 577.5,225.5 578.5,225.5 579.5,225.5 580.5,224.5 581.5,224.5 582.5,224.5 583.5,224.5 584.5,224.5 585.5,224.5 586.5,224.5 587.5,224.5 588.5,224.5 589.5,223.5 590.5,223.5 591.5,223.5 592.5,223.5 593.5,223.5 594.5,223.5 595.5,223.5 596.5,223.5 597.5,223.5 598.5,223.5 599.5,223.5 600.5,223.5 601.5,223.5 602.5,223.5 603.5,223.5 604.5,223.5 605.5,223.5 606.5,223.5 607.5,223.5 608.5,223.5 609.5,223.5 610.5,223.5 611.5,223.5 612.5,223.5 613.5,223.5 614.5,223.5 615.5,223.5 616.5,223.5 617.5,223.5 618.5,223.5 619.5,223.5 620.5,223.5 621.5,223.5 622.5,223.5 623.5,223.5 624.5,224.5 625.5,224.5 626.5,224.5 627.5,224.5 628.5,224.5 629.5,224.5 630.5,224.5 631.5,224.5 632.5,224.5 633.5,224.5 634.5,224.5 635.5,224.5 636.5,225.5 637.5,225.5 638.5,225.5 639.5,225.5 640.5,225.5 641.5,225.5 642.5,225.5 643.5,225.5 644.5,225.5 645.5,225.5 646.5,225.5 647.5,225.5 648.5,225.5 649.5,225.5 650.5,225.5 651.5,226.5 652.5,226.5 653.5,226.5 654.5,226.5 655.5,226.5 656.5,226.5 657.5,226.5 658.5,226.5 659.5,226.5 660.5,226.5 661.5,226.5 662.5,226.5 663.5,226.5 664.5,226.5 665.5,226.5 666.5,226.5 667.5,226.5 668.5,226.5 669.5,226.5 670.5,226.5 671.5,226.5 672.5,226.5 673.5,226.5 674.5,226.5 675.5,226.5 676.5,226.5 677.5,226.5 678.5,226.5 679.5,226.5 680.5,225.5 681.5,225.5 682.5,225.5 683.5,225.5 684.5,225.5 685.5,225.5 686.5,225.5 687.5,225.5 688.5,225.5 689.5,225.5 690.5,225.5 691.5,225.5 692.5,224.5 693.5,224.5 694.5,224.5 695.5,224.5 696.5,224.5 697.5,224.5 698.5,224.5 699.5,224.5 700.5,223.5 701.5,223.5 702.5,223.5 703.5,223.5 704.5,223.5 705.5,223.5 706.5,223.5 707.5,223.5 708.5,223.5 709.5,223.5 710.5,223.5 711.5,223.5 712.5,223.5 713.5,223.5 714.5,223.5 715.5,223.5 716.5,223.5 717.5,223.5 718.5,223.5 719.5,223.5 720.5,223.5 721.5,223.5 722.5,223.5 723.5,223.5 724.5,223.5 725.5,223.5 726.5,223.5 727.5,223.5 728.5,223.5 729.5,223.5 730.5,223.5 731.5,223.5 732.5,223.5 733.5,223.5 734.5,223.5 735.5,223.5 736.5,224.5 737.5,224.5 738.5,224.5 739.5,224.5 740.5,224.5 741.5,224.5 742.5,224.5 743.5,224.5 744.5,224.5 745.5,224.5 746.5,224.5 747.5,224.5 748.5,225.5 749.5,225.5 750.5,225.5 751.5,225.5 752.5,225.5 753.5,225.5 754.5,225.5 755.5,225.5 756.5,225.5 757.5,225.5 758.5,225.5 759.5,225.5 760.5,225.5 761.5,225.5 762.5,225.5 763.5,226.5 764.5,226.5 765.5,226.5 766.5,226.5 767.5,226.5 768.5,226.5 769.5,226.5 770.5,226.5 771.5,226.5 772.5,226.5 773.5,226.5" fill="none" stroke="#ffffff" stroke-width="1"/><polyline points="166.5,484.5 167.5,484.5 168.5,484.5 169.5,484.5 170.5,484.5 171.5,484.5 172.5,484.5 173.5,484.5 174.5,484.5 175.5,484.5 176.5,484.5 177.5,484.5 178.5,484.5 179.5,484.5 180.5,484.5 181.5,483.5 182.5,483.5 183.5,483.5 184.5,483.5 185.5,483.5 186.5,483.5 187.5,483.5 188.5,483.5 189.5,483.5 190.5,483.5 191.5,483.5 192.5,483.5 193.5,482.5 194.5,482.5 195.5,482.5 196.5,482.5 197.5,482.5 198.5,482.5 199.5,482.5 200.5,482.5 201.5,482.5 202.5,482.5 203.5,482.5 204.5,482.5 205.5,482.5 206.5,482.5 207.5,482.5 208.5,482.5 209.5,482.5 210.5,482.5 211.5,481.5 212.5,481.5 213.5,481.5 214.5,481.5 215.5,481.5 216.5,481.5 217.5,481.5 218.5,481.5 219.5,481.5 220.5,481.5 221.5,481.5 222.5,481.5 223.5,481.5 224.5,481.5 225.5,481.5 226.5,481.5 227.5,482.5 228.5,482.5 229.5,482.5 230.5,482.5 231.5,482.5 232.5,482.5 233.5,482.5 234.5,482.5 235.5,482.5 236.5,482.5 237.5,482.5 238.5,482.5 239.5,482.5 240.5,482.5 241.5,482.5 242.5,483.5 243.5,483.5 244.5,483.5 245.5,483.5 246.5,483.5 247.5,483.5 248.5,483.5 249.5,483.5 250.5,483.5 251.5,484.5 252.5,484.5 253.5,484.5 254.5,484.5 255.5,484.5 256.5,484.5 257.5,484.5 258.5,484.5 259.5,484.5 260.5,484.5 261.5,485.5 262.5,485.5 263.5,485.5 264.5,485.5 265.5,485.5 266.5,485.5 267.5,485.5 268.5,485.5 269.5,485.5 270.5,485.5 271.5,485.5 272.5,485.5 273.5,485.5 274.5,485.5 275.5,485.5 276.5,485.5 277.5,484.5 278.5,484.5 279.5,484.5 280.5,484.5 281.5,484.5 282.5,484.5 283.5,484.5 284.5,484.5 285.5,484.5 286.5,484.5 287.5,484.5 288.5,484.5 289.5,484.5 290.5,484.5 291.5,484.5 292.5,483.5 293.5,483.5 294.5,483.5 295.5,483.5 296.5,483.5 297.5,483.5 298.5,483.5 299.5,483.5 300.5,483.5 301.5,483.5 302.5,483.5 303.5,483.5 304.5,483.5 305.5,482.5 306.5,482.5 307.5,482.5 308.5,482.5 309.5,482.5 310.5,482.5 311.5,482.5 312.5,482.5 313.5,482.5 314.5,482.5 315.5,482.5 316.5,482.5 317.5,482.5 318.5,482.5 319.5,482.5 320.5,482.5 321.5,482.5 322.5,481.5 323.5,481.5 324.5,481.5 325.5,481.5 326.5,481.5 327.5,481.5 328.5,481.5 329.5,481.5 330.5,481.5 331.5,481.5 332.5,481.5 333.5,481.5 334.5,481.5 335.5,481.5 336.5,481.5 337.5,481.5 338.5,481.5 339.5,482.5 340.5,482.5 341.5,482.5 342.5,482.5 343.5,482.5 344.5,482.5 345.5,482.5 346.5,482.5 347.5,482.5 348.5,482.5 349.5,482.5 350.5,482.5 351.5,482.5 352.5,482.5 353.5,482.5 354.5,483.5 355.5,483.5 356.5,483.5 357.5,483.5 358.5,483.5 359.5,483.5 360.5,483.5 361.5,483.5 362.5,483.5 363.5,484.5 364.5,484.5 365.5,484.5 366.5,484.5 367.5,484.5 368.5,484.5 369.5,484.5 370.5,484.5 371.5,484.5 372.5,484.5 373.5,485.5 374.5,485.5 375.5,485.5 376.5,485.5 377.5,485.5 378.5,485.5 379.5,485.5 380.5,485.5 381.5,485.5 382.5,485.5 383.5,485.5 384.5,485.5 385.5,485.5 386.5,485.5 387.5,485.5 388.5,485.5 389.5,484.5 390.5,484.5 391.5,484.5 392.5,484.5 393.5,484.5 394.5,484.5 395.5,484.5 396.5,484.5 397.5,484.5 398.5,484.5 399.5,484.5 400.5,484.5 401.5,484.5 402.5,484.5 403.5,484.5 404.5,483.5 405.5,483.5 406.5,483.5 407.5,483.5 408.5,483.5 409.5,483.5 410.5,483.5 411.5,483.5 412.5,483.5 413.5,483.5 414.5,483.5 415.5,483.5 416.5,483.5 417.5,482.5 418.5,482.5 419.5,482.5 420.5,482.5 421.5,482.5 422.5,482.5 423.5,482.5 424.5,482.5 425.5,482.5 426.5,482.5 427.5,482.5 428.5,482.5 429.5,482.5 430.5,482.5 431.5,482.5 432.5,482.5 433.5,482.5 434.5,481.5 435.5,481.5 436.5,481.5 437.5,481.5 438.5,481.5 439.5,481.5 440.5,481.5 441.5,481.5 442.5,481.5 443.5,481.5 444.5,481.5 445.5,481.5 446.5,481.5 447.5,481.5 448.5,481.5 449.5,481.5 450.5,481.5 451.5,482.5 452.5,482.5 453.5,482.5 454.5,482.5 455.5,482.5 456.5,482.5 457.5,482.5 458.5,482.5 459.5,482.5 460.5,482.5 461.5,482.5 462.5,482.5 463.5,482.5 464.5,482.5 465.5,482.5 466.5,483.5 467.5,483.5 468.5,483.5 469.5,483.5 470.5,483.5 471.5,483.5 472.5,483.5 473.5,483.5 474.5,483.5 475.5,484.5 476.5,484.5 477.5,484.5 478.5,484.5 479.5,484.5 480.5,484.5 481.5,484.5 482.5,484.5 483.5,484.5 484.5,485.5 485.5,485.5 486.5,485.5 487.5,485.5 488.5,485.5 489.5,485.5 490.5,485.5 491.5,485.5 492.5,485.5 493.5,485.5 494.5,485.5 495.5,485.5 496.5,485.5 497.5,485.5 498.5,485.5 499.5,485.5 500.5,485.5 501.5,484.5 502.5,484.5 503.5,484.5 504.5,484.5 505.5,484.5 506.5,484.5 507.5,484.5 508.5,484.5 509.5,484.5 510.5,484.5 511.5,484.5 512.5,484.5 513.5,484.5 514.5,484.5 515.5,484.5 516.5,483.5 517.5,483.5 518.5,483.5 519.5,483.5 520.5,483.5 521.5,483.5 522.5,483.5 523.5,483.5 524.5,483.5 525.5,483.5 526.5,483.5 527.5,483.5 528.5,483.5 529.5,482.5 530.5,482.5 531.5,482.5 532.5,482.5 533.5,482.5 534.5,482.5 535.5,482.5 536.5,482.5 537.5,482.5 538.5,482.5 539.5,482.5 540.5,482.5 541.5,482.5 542.5,482.5 543.5,482.5 544.5,482.5 545.5,482.5 546.5,481.5 547.5,481.5 548.5,481.5 549.5,481.5 550.5,481.5 551.5,481.5 552.5,481.5 553.5,481.5 554.5,481.5 555.5,481.5 556.5,481.5 557.5,481.5 558.5,481.5 559.5,481.5 560.5,481.5 561.5,481.5 562.5,481.5 563.5,482.5 564.5,482.5 565.5,482.5 566.5,482.5 567.5,482.5 568.5,482.5 569.5,482.5 570.5,482.5 571.5,482.5 572.5,482.5 573.5,482.5 574.5,482.5 575.5,482.5 576.5,482.5 577.5,482.5 578.5,483.5 579.5,483.5 580.5,483.5 581.5,483.5 582.5,483.5 583.5,483.5 584.5,483.5 585.5,483.5 586.5,484.5 587.5,484.5 588.5,484.5 589.5,484.5 590.5,484.5 591.5,484.5 592.5,484.5 593.5,484.5 594.5,484.5 595.5,484.5 596.5,485.5 597.5,485.5 598.5,485.5 599.5,485.5 600.5,485.5 601.5,485.5 602.5,485.5 603.5,485.5 604.5,485.5 605.5,485.5 606.5,485.5 607.5,485.5 608.5,485.5 609.5,485.5 610.5,485.5 611.5,485.5 612.5,485.5 613.5,484.5 614.5,484.5 615.5,484.5 616.5,484.5 617.5,484.5 618.5,484.5 619.5,484.5 620.5,484.5 621.5,484.5 622.5,484.5 623.5,484.5 624.5,484.5 625.5,484.5 626.5,484.5 627.5,484.5 628.5,483.5 629.5,483.5 630.5,483.5 631.5,483.5 632.5,483.5 633.5,483.5 634.5,483.5 635.5,483.5 636.5,483.5 637.5,483.5 638.5,483.5 639.5,483.5 640.5,482.5 641.5,482.5 642.5,482.5 643.5,482.5 644.5,482.5 645.5,482.5 646.5,482.5 647.5,482.5 648.5,482.5 649.5,482.5 650.5,482.5 651.5,482.5 652.5,482.5 653.5,482.5 654.5,482.5 655.5,482.5 656.5,482.5 657.5,482.5 658.5,481.5 659.5,481.5 660.5,481.5 661.5,481.5 662.5,481.5 663.5,481.5 664.5,481.5 665.5,481.5 666.5,481.5 667.5,481.5 668.5,481.5 669.5,481.5 670.5,481.5 671.5,481.5 672.5,481.5 673.5,481.5 674.5,482.5 675.5,482.5 676.5,482.5 677.5,482.5 678.5,482.5 679.5,482.5 680.5,482.5 681.5,482.5 682.5,482.5 683.5,482.5 684.5,482.5 685.5,482.5 686.5,482.5 687.5,482.5 688.5,482.5 689.5,483.5 690.5,483.5 691.5,483.5 692.5,483.5 693.5,483.5 694.5,483.5 695.5,483.5 696.5,483.5 697.5,483.5 698.5,484.5 699.5,484.5 700.5,484.5 701.5,484.5 702.5,484.5 703.5,484.5 704.5,484.5 705.5,484.5 706.5,484.5 707.5,484.5 708.5,485.5 709.5,485.5 710.5,485.5 711.5,485.5 712.5,485.5 713.5,485.5 714.5,485.5 715.5,485.5 716.5,485.5 717.5,485.5 718.5,485.5 719.5,485.5 720.5,485.5 721.5,485.5 722.5,485.5 723.5,485.5 724.5,484.5 725.5,484.5 726.5,484.5 727.5,484.5 728.5,484.5 729.5,484.5 730.5,484.5 731.5,484.5 732.5,484.5 733.5,484.5 734.5,484.5 735.5,484.5 736.5,484.5 737.5,484.5 738.5,484.5 739.5,483.5 740.5,483.5 741.5,483.5 742.5,483.5 743.5,483.5 744.5,483.5 745.5,483.5 746.5,483.5 747.5,483.5 748.5,483.5 749.5,483.5 750.5,483.5 751.5,483.5 752.5,482.5 753.5,482.5 754.5,482.5 755.5,482.5 756.5,482.5 757.5,482.5 758.5,482.5 759.5,482.5 760.5,482.5 761.5,482.5 762.5,482.5 763.5,482.5 764.5,482.5 765.5,482.5 766.5,482.5 767.5,482.5 768.5,482.5 769.5,481.5 770.5,481.5 771.5,481.5 772.5,481.5 773.5,481.5" fill="none" stroke="#ff00ff" stroke-width="1"/><polyline points="166.5,283.6 167.5,281.3 168.5,278.9 169.5,276.7 170.5,274.5 171.5,272.3 172.5,270.3 173.5,268.2 174.5,266.3 175.5,264.4 176.5,262.6 177.5,260.8 178.5,259.1 179.5,257.5 180.5,256.0 181.5,254.5 182.5,253.1 183.5,251.8 184.5,250.5 185.5,249.4 186.5,248.3 187.5,247.3 188.5,246.4 189.5,245.6 190.5,244.8 191.5,244.1 192.5,243.6 193.5,243.1 194.5,242.7 195.5,242.3 196.5,242.1 197.5,241.9 198.5,241.9 199.5,241.9 200.5,242.0 201.5,242.2 202.5,242.5 203.5,242.9 204.5,243.3 205.5,243.9 206.5,244.5 207.5,245.3 208.5,246.1 209.5,247.0 210.5,247.9 211.5,249.0 212.5,250.1 213.5,251.4 214.5,252.7 215.5,254.1 216.5,255.6 217.5,257.1 218.5,258.7 219.5,260.4 220.5,262.2 221.5,264.1 222.5,266.0 223.5,268.0 224.5,270.1 225.5,272.2 226.5,274.4 227.5,276.7 228.5,279.0 229.5,281.4 230.5,283.9 231.5,286.4 232.5,288.9 233.5,291.5 234.5,294.2 235.5,296.9 236.5,299.7 237.5,302.5 238.5,305.3 239.5,308.2 240.5,311.1 241.5,314.1 242.5,317.0 243.5,320.1 244.5,323.1 245.5,326.2 246.5,329.3 247.5,332.4 248.5,335.5 249.5,338.6 250.5,341.8 251.5,344.9 252.5,348.1 253.5,351.3 254.5,354.5 255.5,357.6 256.5,360.8 257.5,363.9 258.5,367.1 259.5,370.2 260.5,373.4 261.5,376.5 262.5,379.5 263.5,382.6 264.5,385.6 265.5,388.6 266.5,391.6 267.5,394.6 268.5,397.5 269.5,400.4 270.5,403.2 271.5,406.0 272.5,408.7 273.5,411.4 274.5,414.1 275.5,416.7 276.5,419.2 277.5,421.7 278.5,424.1 279.5,426.5 280.5,428.8 281.5,431.1 282.5,433.3 283.5,435.4 284.5,437.4 285.5,439.4 286.5,441.3 287.5,443.2 288.5,444.9 289.5,446.6 290.5,448.2 291.5,449.8 292.5,451.2 293.5,452.6 294.5,453.9 295.5,455.1 296.5,456.2 297.5,457.3 298.5,458.2 299.5,459.1 300.5,459.9 301.5,460.6 302.5,461.2 303.5,461.8 304.5,462.2 305.5,462.6 306.5,462.8 307.5,463.0 308.5,463.1 309.5,463.1 310.5,463.0 311.5,462.8 312.5,462.6 313.5,462.2 314.5,461.8 315.5,461.3 316.5,460.7 317.5,460.0 318.5,459.2 319.5,458.4 320.5,457.4 321.5,456.4 322.5,455.3 323.5,454.1 324.5,452.9 325.5,451.6 326.5,450.1 327.5,448.7 328.5,447.1 329.5,445.5 330.5,443.8 331.5,442.0 332.5,440.1 333.5,438.2 334.5,436.3 335.5,434.2 336.5,432.1 337.5,430.0 338.5,427.8 339.5,425.5 340.5,423.1 341.5,420.8 342.5,418.3 343.5,415.8 344.5,413.3 345.5,410.7 346.5,408.1 347.5,405.5 348.5,402.7 349.5,400.0 350.5,397.2 351.5,394.4 352.5,391.6 353.5,388.7 354.5,385.8 355.5,382.9 356.5,379.9 357.5,377.0 358.5,374.0 359.5,371.0 360.5,368.0 361.5,365.0 362.5,361.9 363.5,358.9 364.5,355.8 365.5,352.8 366.5,349.7 367.5,346.7 368.5,343.7 369.5,340.6 370.5,337.6 371.5,334.6 372.5,331.6 373.5,328.6 374.5,325.6 375.5,322.7 376.5,319.7 377.5,316.8 378.5,314.0 379.5,311.1 380.5,308.3 381.5,305.5 382.5,302.8 383.5,300.1 384.5,297.4 385.5,294.8 386.5,292.2 387.5,289.6 388.5,287.1 389.5,284.7 390.5,282.3 391.5,280.0 392.5,277.7 393.5,275.4 394.5,273.3 395.5,271.2 396.5,269.1 397.5,267.1 398.5,265.2 399.5,263.3 400.5,261.6 401.5,259.8 402.5,258.2 403.5,256.6 404.5,255.1 405.5,253.7 406.5,252.4 407.5,251.1 408.5,249.9 409.5,248.8 410.5,247.7 411.5,246.8 412.5,245.9 413.5,245.1 414.5,244.4 415.5,243.8 416.5,243.3 417.5,242.8 418.5,242.5 419.5,242.2 420.5,242.0 421.5,241.9 422.5,241.9 423.5,242.0 424.5,242.1 425.5,242.4 426.5,242.7 427.5,243.1 428.5,243.6 429.5,244.2 430.5,244.9 431.5,245.7 432.5,246.6 433.5,247.5 434.5,248.5 435.5,249.6 436.5,250.8 437.5,252.1 438.5,253.5 439.5,254.9 440.5,256.4 441.5,258.0 442.5,259.7 443.5,261.4 444.5,263.3 445.5,265.2 446.5,267.1 447.5,269.2 448.5,271.3 449.5,273.4 450.5,275.7 451.5,278.0 452.5,280.3 453.5,282.8 454.5,285.2 455.5,287.8 456.5,290.4 457.5,293.0 458.5,295.7 459.5,298.4 460.5,301.2 461.5,304.1 462.5,306.9 463.5,309.8 464.5,312.8 465.5,315.7 466.5,318.7 467.5,321.8 468.5,324.8 469.5,327.9 470.5,331.0 471.5,334.1 472.5,337.3 473.5,340.4 474.5,343.6 475.5,346.7 476.5,349.9 477.5,353.1 478.5,356.2 479.5,359.4 480.5,362.6 481.5,365.7 482.5,368.9 483.5,372.0 484.5,375.1 485.5,378.2 486.5,381.3 487.5,384.3 488.5,387.3 489.5,390.3 490.5,393.3 491.5,396.2 492.5,399.1 493.5,401.9 494.5,404.8 495.5,407.5 496.5,410.2 497.5,412.9 498.5,415.5 499.5,418.1 500.5,420.6 501.5,423.1 502.5,425.5 503.5,427.8 504.5,430.1 505.5,432.3 506.5,434.5 507.5,436.6 508.5,438.6 509.5,440.5 510.5,442.4 511.5,444.2 512.5,445.9 513.5,447.5 514.5,449.1 515.5,450.6 516.5,452.0 517.5,453.3 518.5,454.6 519.5,455.8 520.5,456.8 521.5,457.8 522.5,458.7 523.5,459.6 524.5,460.3 525.5,461.0 526.5,461.5 527.5,462.0 528.5,462.4 529.5,462.7 530.5,462.9 531.5,463.1 532.5,463.1 533.5,463.1 534.5,462.9 535.5,462.7 536.5,462.4 537.5,462.0 538.5,461.5 539.5,461.0 540.5,460.3 541.5,459.6 542.5,458.8 543.5,457.9 544.5,456.9 545.5,455.8 546.5,454.7 547.5,453.4 548.5,452.1 549.5,450.8 550.5,449.3 551.5,447.8 552.5,446.2 553.5,444.5 554.5,442.8 555.5,441.0 556.5,439.1 557.5,437.1 558.5,435.1 559.5,433.1 560.5,430.9 561.5,428.7 562.5,426.5 563.5,424.2 564.5,421.8 565.5,419.4 566.5,416.9 567.5,414.4 568.5,411.9 569.5,409.3 570.5,406.6 571.5,403.9 572.5,401.2 573.5,398.5 574.5,395.7 575.5,392.8 576.5,390.0 577.5,387.1 578.5,384.2 579.5,381.2 580.5,378.3 581.5,375.3 582.5,372.3 583.5,369.3 584.5,366.3 585.5,363.3 586.5,360.2 587.5,357.2 588.5,354.1 589.5,351.1 590.5,348.0 591.5,345.0 592.5,342.0 593.5,338.9 594.5,335.9 595.5,332.9 596.5,329.9 597.5,326.9 598.5,324.0 599.5,321.0 600.5,318.1 601.5,315.2 602.5,312.4 603.5,309.5 604.5,306.7 605.5,304.0 606.5,301.3 607.5,298.6 608.5,295.9 609.5,293.3 610.5,290.7 611.5,288.2 612.5,285.8 613.5,283.3 614.5,281.0 615.5,278.7 616.5,276.4 617.5,274.2 618.5,272.1 619.5,270.0 620.5,268.0 621.5,266.0 622.5,264.2 623.5,262.3 624.5,260.6 625.5,258.9 626.5,257.3 627.5,255.8 628.5,254.3 629.5,252.9 630.5,251.6 631.5,250.4 632.5,249.3 633.5,248.2 634.5,247.2 635.5,246.3 636.5,245.5 637.5,244.7 638.5,244.1 639.5,243.5 640.5,243.0 641.5,242.6 642.5,242.3 643.5,242.1 644.5,241.9 645.5,241.9 646.5,241.9 647.5,242.0 648.5,242.2 649.5,242.5 650.5,242.9 651.5,243.4 652.5,244.0 653.5,244.6 654.5,245.3 655.5,246.2 656.5,247.1 657.5,248.1 658.5,249.1 659.5,250.3 660.5,251.5 661.5,252.9 662.5,254.3 663.5,255.7 664.5,257.3 665.5,258.9 666.5,260.7 667.5,262.4 668.5,264.3 669.5,266.2 670.5,268.3 671.5,270.3 672.5,272.5 673.5,274.7 674.5,277.0 675.5,279.3 676.5,281.7 677.5,284.2 678.5,286.7 679.5,289.2 680.5,291.8 681.5,294.5 682.5,297.2 683.5,300.0 684.5,302.8 685.5,305.7 686.5,308.5 687.5,311.5 688.5,314.4 689.5,317.4 690.5,320.4 691.5,323.5 692.5,326.5 693.5,329.6 694.5,332.7 695.5,335.9 696.5,339.0 697.5,342.2 698.5,345.3 699.5,348.5 700.5,351.7 701.5,354.8 702.5,358.0 703.5,361.2 704.5,364.3 705.5,367.5 706.5,370.6 707.5,373.7 708.5,376.8 709.5,379.9 710.5,383.0 711.5,386.0 712.5,389.0 713.5,392.0 714.5,394.9 715.5,397.8 716.5,400.7 717.5,403.5 718.5,406.3 719.5,409.1 720.5,411.7 721.5,414.4 722.5,417.0 723.5,419.5 724.5,422.0 725.5,424.4 726.5,426.8 727.5,429.1 728.5,431.4 729.5,433.5 730.5,435.6 731.5,437.7 732.5,439.7 733.5,441.6 734.5,443.4 735.5,445.2 736.5,446.8 737.5,448.4 738.5,450.0 739.5,451.4 740.5,452.8 741.5,454.0 742.5,455.3 743.5,456.4 744.5,457.4 745.5,458.4 746.5,459.2 747.5,460.0 748.5,460.7 749.5,461.3 750.5,461.8 751.5,462.2 752.5,462.6 753.5,462.8 754.5,463.0 755.5,463.1 756.5,463.1 757.5,463.0 758.5,462.8 759.5,462.5 760.5,462.2 761.5,461.7 762.5,461.2 763.5,460.6 764.5,459.9 765.5,459.1 766.5,458.3 767.5,457.3 768.5,456.3 769.5,455.2 770.5,454.0 771.5,452.7 772.5,451.4 773.5,450.0" fill="none" stroke="#ffff00" stroke-width="3.5" stroke-linejoin="round"/></g><g shape-rendering="crispEdges"><line x1="62" y1="166.5" x2="811" y2="166.5" stroke="#787878" stroke-dasharray="2 2"/><line x1="64" y1="541.5" x2="811" y2="541.5" stroke="#787878" stroke-dasharray="2 2"/><line x1="61.5" y1="168" x2="61.5" y2="542" stroke="#787878" stroke-dasharray="2 2"/><line x1="810.5" y1="169" x2="810.5" y2="542" stroke="#787878" stroke-dasharray="2 2"/><line x1="365.5" y1="167" x2="365.5" y2="541" stroke="#0fc4e6" stroke-dasharray="1 1"/><line x1="588.5" y1="167" x2="588.5" y2="541" stroke="#ffffff" stroke-dasharray="1 1"/><line x1="367" y1="530.5" x2="436" y2="530.5" stroke="#ffffff" stroke-dasharray="1 1"/><line x1="517" y1="530.5" x2="587" y2="530.5" stroke="#ffffff" stroke-dasharray="1 1"/></g><text x="159.4" y="256.0" font-size="25.6" fill="#cccccc" text-anchor="end">40</text><text x="159.4" y="309.8" font-size="25.6" fill="#cccccc" text-anchor="end">20</text><text x="159.4" y="363.5" font-size="25.6" fill="#cccccc" text-anchor="end">0</text><text x="159.4" y="417.2" font-size="25.6" fill="#cccccc" text-anchor="end">-20</text><text x="159.4" y="471.0" font-size="25.6" fill="#cccccc" text-anchor="end">-40</text><text x="258.2" y="512" font-size="17.5" fill="#cccccc" text-anchor="middle">10.1</text><text x="369.9" y="512" font-size="17.5" fill="#cccccc" text-anchor="middle">10.2</text><text x="481.6" y="512" font-size="17.5" fill="#cccccc" text-anchor="middle">10.3</text><text x="593.4" y="512" font-size="17.5" fill="#cccccc" text-anchor="middle">10.4</text><text x="705.1" y="512" font-size="17.5" fill="#cccccc" text-anchor="middle">10.5</text><text x="63.5" y="180" font-size="14.2" fill="#ff0000">outm</text><text x="63.5" y="194" font-size="11" fill="#ff0000">-1.502</text><text x="250.8" y="180" font-size="14.2" font-weight="bold" fill="#ffff00">outp</text><text x="250.8" y="194" font-size="11" fill="#ffff00">0.6381</text><text x="438" y="180" font-size="14.2" fill="#ffffff">vpp</text><text x="438" y="194" font-size="11" fill="#ffffff">48.31</text><text x="624.5" y="180" font-size="14.2" fill="#ff00ff">vnn</text><text x="624.5" y="194" font-size="11" fill="#ff00ff">-48.33</text><text x="63.5" y="536.6" font-size="14.5" fill="#ff0000">time[m]</text><text x="362.8" y="535.8" font-size="17.2" fill="#0fc4e6" text-anchor="end">10.2m</text><text x="477.6" y="535.8" font-size="17.2" fill="#cccccc" text-anchor="middle">0.1985m</text><text x="591.2" y="535.8" font-size="17.2" fill="#cccccc">10.39m</text><text x="0.7" y="585.6" font-size="20" fill="#cccccc">e</text></svg>
<div class="a" style="left:4px;top:593px;width:899px;height:22px;background:#d9d9d9"></div>
<div class="t" style="left:6px;top:598px">SNAP:</div>
<div class="a" style="left:49px;top:594px;width:84px;height:21px;background:#98fb98;border:1px solid #828282;border-right-color:#fff;border-bottom-color:#fff"></div>
<div class="t" style="left:51px;top:598px">10</div>
<div class="t" style="left:136px;top:598px">GRID:</div>
<div class="a" style="left:177px;top:594px;width:84px;height:21px;background:#98fb98;border:1px solid #828282;border-right-color:#fff;border-bottom-color:#fff"></div>
<div class="t" style="left:179px;top:598px">20</div>
<div class="t" style="left:264px;top:598px;letter-spacing:-0.18px">NETLIST MODE:</div>
<div class="a" style="left:369px;top:594px;width:68px;height:20.5px;background:#fff;border-left:1px solid #8a8a8a;border-top:1px solid #8a8a8a"></div>
<div class="t" style="left:386px;top:598px">spice</div>
<div class="t" style="left:443px;top:598px;letter-spacing:-0.235px">mouse = 2100 -500 - selected: 1 w=730 h=-180</div>
</body></html>
